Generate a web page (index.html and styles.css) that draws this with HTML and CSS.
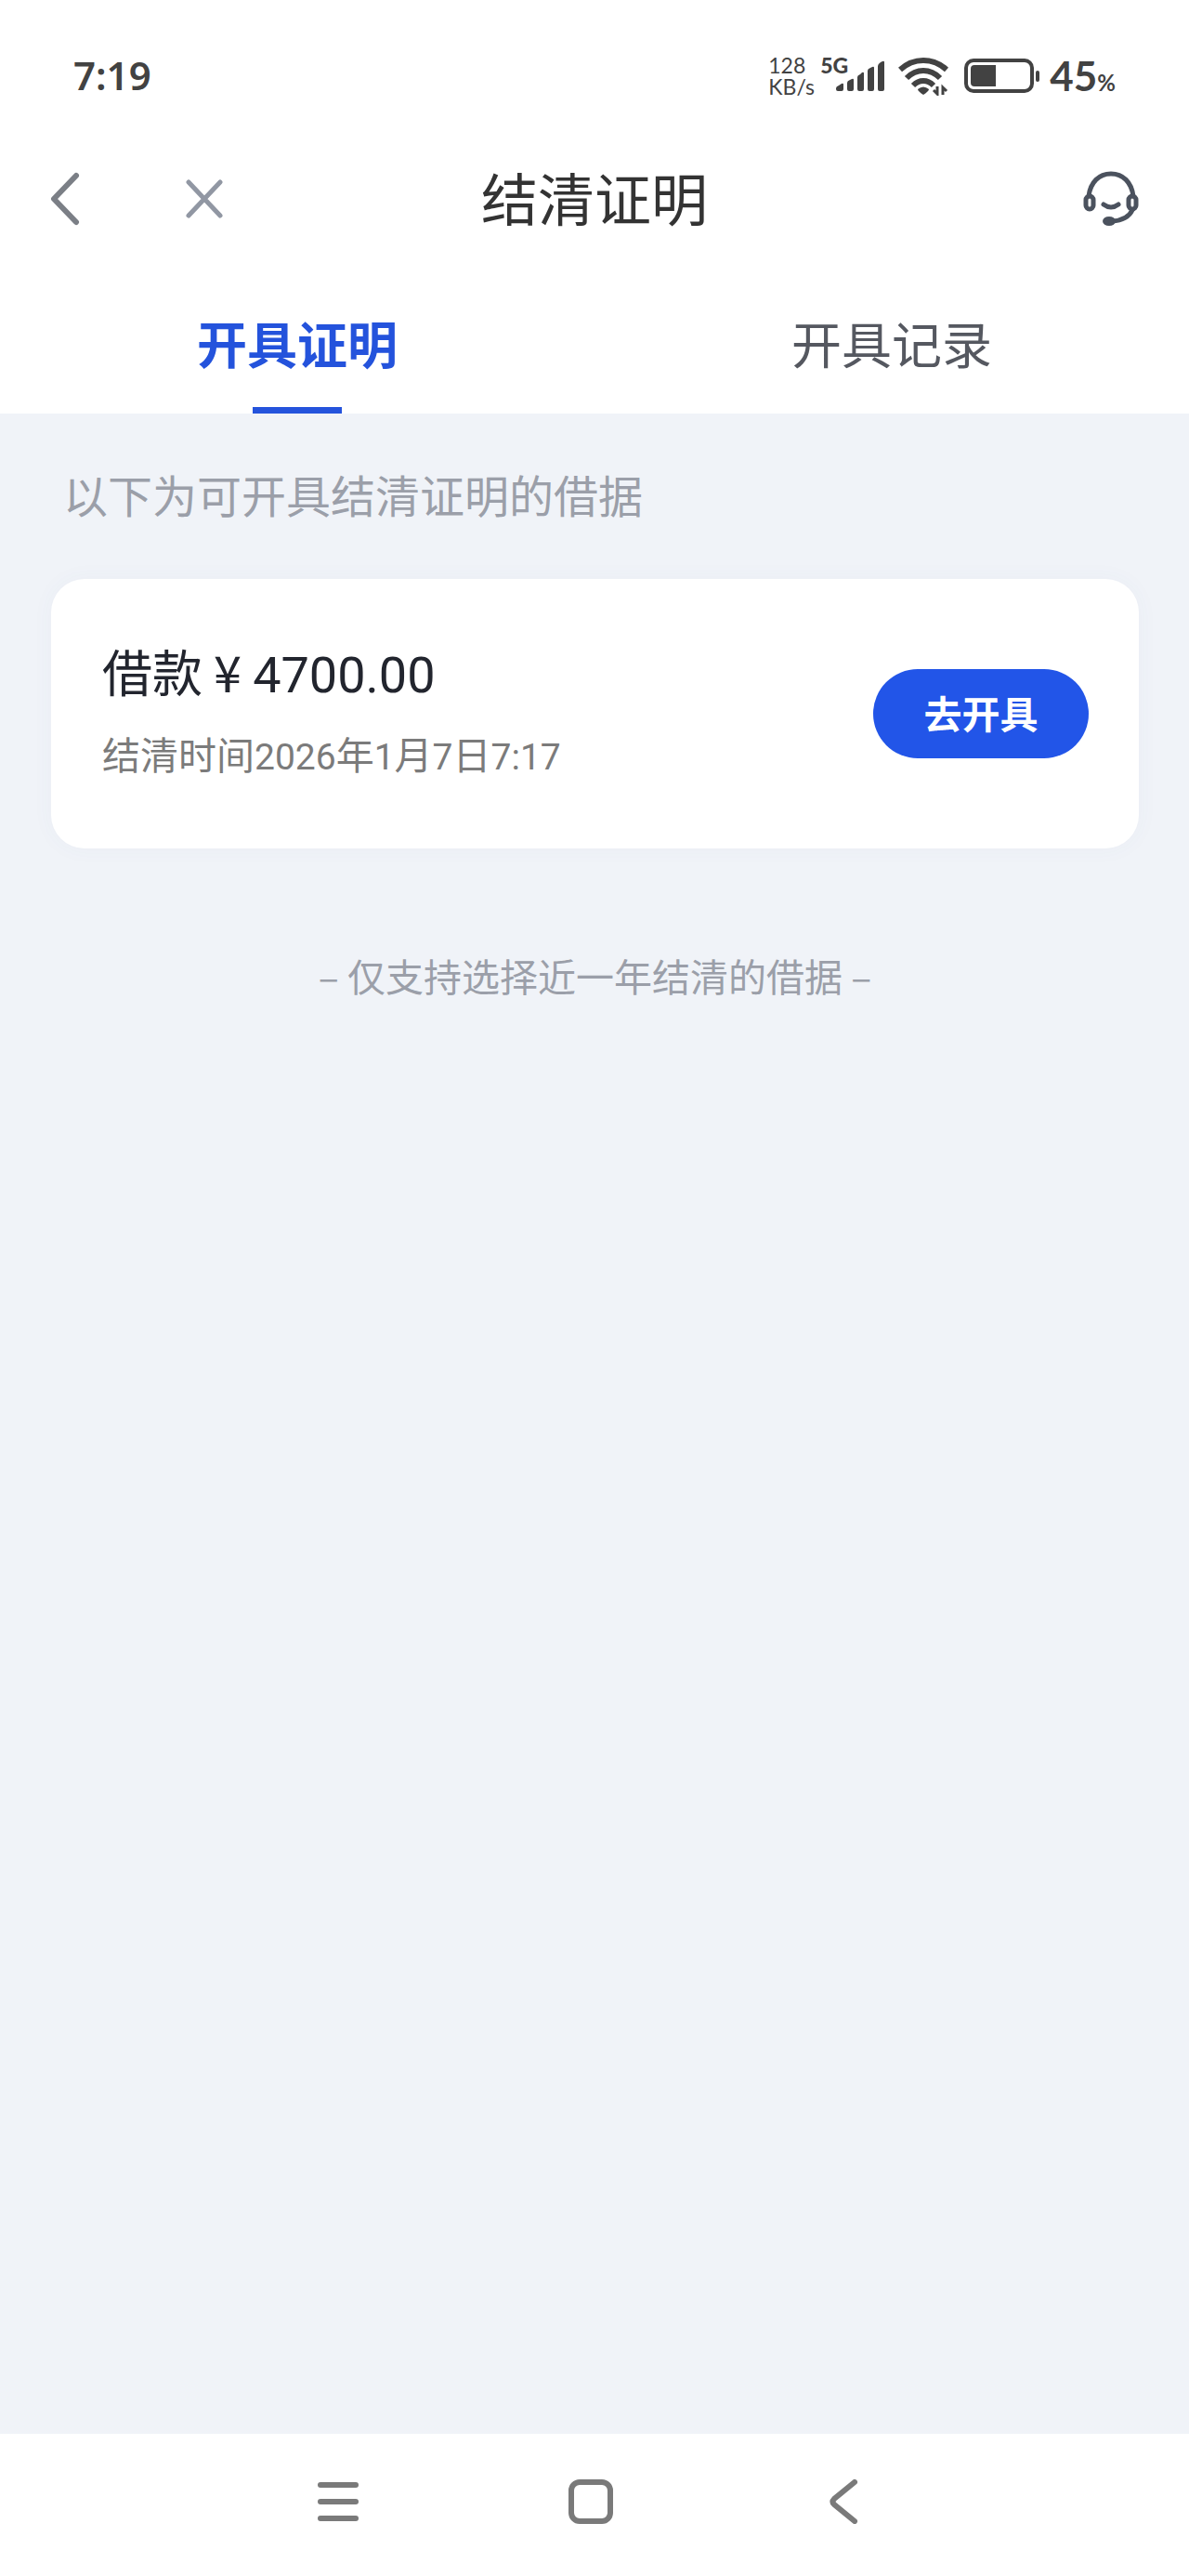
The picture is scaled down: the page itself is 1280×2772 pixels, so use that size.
FILE: index.html
```html
<!DOCTYPE html>
<html lang="zh-CN">
<head>
    <meta charset="UTF-8">
    <meta name="viewport" content="width=device-width, initial-scale=1.0">
    <title>结清证明</title>
    <link rel="stylesheet" href="styles.css">
</head>
<body>
    <div class="status-bar">
        <span class="time">7:19</span>
        <div class="status-icons">
            <div class="speed"><span>128</span><span>KB/s</span></div>
            <div class="signal">
                <span class="network">5G</span>
                <svg width="52" height="34" viewBox="0 0 52 34" fill="#424242">
                    <path d="M0 31v-1q0-2 3-3l3-2q2-1 2 1v5q0 2-2 2H2q-2 0-2-2z"/>
                    <path d="M12 24q0-2 3-3l2-1q2-1 2 1v10q0 2-2 2h-3q-2 0-2-2z"/>
                    <path d="M23 18q0-2 3-3l2-2q2-1 2 1v17q0 2-2 2h-3q-2 0-2-2z"/>
                    <path d="M34 11q0-2 3-3l2-1q2-1 2 1v23q0 2-2 2h-3q-2 0-2-2z"/>
                    <path d="M45 6q0-2 3-4l2-1q2-1 2 1v29q0 2-2 2h-3q-2 0-2-2z"/>
                </svg>
            </div>
            <svg class="wifi" width="54" height="42" viewBox="0 0 54 42" fill="none" stroke="#424242" stroke-width="6">
                <path d="M2 14Q13 4 27 4t25 10"/>
                <path d="M9 23q8-8 18-8t18 8"/>
                <path d="M16 31q5-5 11-5t11 5"/>
                <path d="M21 35q6-5 12 0 0 2-6 6-6-4-6-6z" fill="#424242" stroke="none"/>
                <path d="M42 32v8l-4-4M48 41v-8l4 4" stroke-width="3"/>
            </svg>
            <svg class="battery" width="82" height="38" viewBox="0 0 82 38">
                <rect x="2" y="2" width="71" height="33" rx="8" fill="none" stroke="#424242" stroke-width="4"/>
                <path d="M11 7h23v23H11q-4 0-4-4V11q0-4 4-4z" fill="#424242"/>
                <rect x="77" y="13" width="4" height="12" rx="2" fill="#424242"/>
            </svg>
            <span class="percent">45<small>%</small></span>
        </div>
    </div>

    <header class="header">
        <div class="header-left">
            <button class="icon-button" aria-label="返回">
                <svg width="32" height="58" viewBox="0 0 32 58" fill="none" stroke="#7b7f86" stroke-width="6" stroke-linecap="round" stroke-linejoin="round">
                    <path d="M28 4L4 29l24 25"/>
                </svg>
            </button>
            <button class="icon-button" aria-label="关闭">
                <svg width="40" height="42" viewBox="0 0 40 42" fill="none" stroke="#9197a3" stroke-width="5" stroke-linecap="round">
                    <path d="M3 3l34 36M37 3L3 39"/>
                </svg>
            </button>
        </div>
        <h1>结清证明</h1>
        <button class="icon-button header-right" aria-label="客服">
            <svg width="60" height="60" viewBox="0 0 60 60" fill="none" stroke="#4b525e" stroke-width="5" stroke-linecap="round">
                <path d="M6 27C8 12 17 3 30 3s22 9 24 24"/>
                <rect x="3" y="27" width="8" height="14" rx="4"/>
                <rect x="49" y="27" width="8" height="14" rx="4"/>
                <path d="M22 36q8 6 16 0M53 42q-5 11-22 12"/>
                <ellipse cx="28" cy="54" rx="6" ry="4" fill="#4b525e" stroke-width="2"/>
            </svg>
        </button>
    </header>

    <nav class="tabs">
        <a href="#" class="tab active">开具证明</a>
        <a href="#" class="tab">开具记录</a>
    </nav>

    <main class="content">
        <p class="tip">以下为可开具结清证明的借据</p>
        <div class="card">
            <div class="loan">
                <p class="amount">借款 ¥ <span class="number">4700.00</span></p>
                <p class="date">结清时间<span class="number">2026</span>年<span class="number">1</span>月<span class="number">7</span>日<span class="number">7:17</span></p>
            </div>
            <button class="issue">去开具</button>
        </div>
        <p class="footnote">– 仅支持选择近一年结清的借据 –</p>
    </main>

    <footer class="nav-bar">
        <button class="icon-button" aria-label="菜单">
            <svg width="48" height="48" viewBox="0 0 48 48" stroke="#7a7a7a" stroke-width="6" stroke-linecap="round">
                <path d="M5 6h38M5 24h38M5 42h38"/>
            </svg>
        </button>
        <button class="icon-button" aria-label="主页">
            <svg width="48" height="48" viewBox="0 0 48 48" fill="none" stroke="#7a7a7a" stroke-width="6">
                <rect x="3" y="3" width="42" height="42" rx="9"/>
            </svg>
        </button>
        <button class="icon-button" aria-label="后退">
            <svg width="48" height="48" viewBox="0 0 48 48" fill="none" stroke="#7a7a7a" stroke-width="6" stroke-linecap="round">
                <path d="M36 3L14 21q-3 3 0 6l22 18"/>
            </svg>
        </button>
    </footer>
</body>
</html>
```

FILE: styles.css
```css
* {
    box-sizing: border-box;
}
body {
    margin: 0;
    min-height: 100vh;
    display: flex;
    flex-direction: column;
    font-family: "Noto Sans CJK SC", sans-serif;
    background-color: #f0f3f8;
}
h1, p {
    margin: 0;
    font-weight: normal;
}
svg {
    display: block;
}
button {
    border: none;
    padding: 0;
    font-family: inherit;
    cursor: pointer;
}
.icon-button {
    background: none;
}

/* status bar */
.status-bar {
    display: flex;
    justify-content: space-between;
    align-items: center;
    height: 164px;
    padding: 0 79px;
    background: white;
    color: #424242;
    font-family: Lato, sans-serif;
}
.time {
    padding-bottom: 4px;
    font-family: "Noto Sans", sans-serif;
    font-size: 42px;
    font-weight: 600;
}
.status-icons {
    display: flex;
    align-items: center;
}
.speed {
    display: flex;
    flex-direction: column;
    width: 73px;
    font-size: 23px;
    line-height: 23px;
}
.signal {
    position: relative;
}
.network {
    position: absolute;
    left: -17px;
    top: -6px;
    font-size: 23px;
    line-height: 23px;
    font-weight: 900;
}
.wifi {
    margin-left: 15px;
}
.battery {
    margin-left: 17px;
}
.percent {
    margin-left: 10px;
    padding-bottom: 2px;
    font-size: 44px;
    font-weight: bold;
}
.percent small {
    font-size: 24px;
}

/* title bar */
.header {
    display: grid;
    grid-template-columns: 1fr auto 1fr;
    align-items: center;
    height: 100px;
    padding: 0 54px;
    background: white;
}
.header-left {
    display: flex;
    align-items: center;
    gap: 114px;
}
.header-right {
    justify-self: end;
}
h1 {
    padding-bottom: 4px;
    font-size: 61px;
    line-height: 72px;
    color: #333;
}

/* tabs */
.tabs {
    display: flex;
    background: white;
}
.tab {
    flex: 1;
    display: flex;
    flex-direction: column;
    align-items: center;
    padding-top: 69px;
    font-size: 54px;
    line-height: 72px;
    color: #555860;
    text-decoration: none;
}
.tab::after {
    content: "";
    width: 96px;
    height: 7px;
    margin-top: 33px;
}
.tab.active {
    color: #2453dc;
    font-weight: bold;
}
.tab.active::after {
    background: #2453dc;
}

/* loan list */
.content {
    flex: 1;
    padding: 53px 54px 53px 55px;
}
.tip {
    padding-left: 13px;
    font-size: 48px;
    line-height: 66px;
    color: #9b9fa9;
}
.card {
    display: flex;
    justify-content: space-between;
    align-items: center;
    margin-top: 59px;
    padding: 63px 54px 63px 55px;
    background: white;
    border-radius: 36px;
    box-shadow: 0 0 24px rgba(80, 90, 160, 0.04);
}
.loan {
    padding-bottom: 10px;
}
.number {
    font-family: Roboto, sans-serif;
    line-height: 1;
}
.amount {
    font-size: 54px;
    line-height: 72px;
    color: #22252e;
}
.date {
    margin-top: 22px;
    font-size: 41px;
    line-height: 60px;
    color: #7b7b7b;
}
.date .number {
    font-size: 39px;
}
.issue {
    width: 232px;
    height: 96px;
    padding-bottom: 4px;
    border-radius: 48px;
    background: #2255e8;
    color: white;
    font-size: 41px;
    font-weight: bold;
}
.footnote {
    margin-top: 106px;
    font-size: 41px;
    line-height: 60px;
    color: #9b9fa9;
    text-align: center;
}

/* system navigation */
.nav-bar {
    display: flex;
    justify-content: center;
    align-items: center;
    gap: 224px;
    height: 153px;
    padding: 0 8px 8px 0;
    background: white;
}
```
